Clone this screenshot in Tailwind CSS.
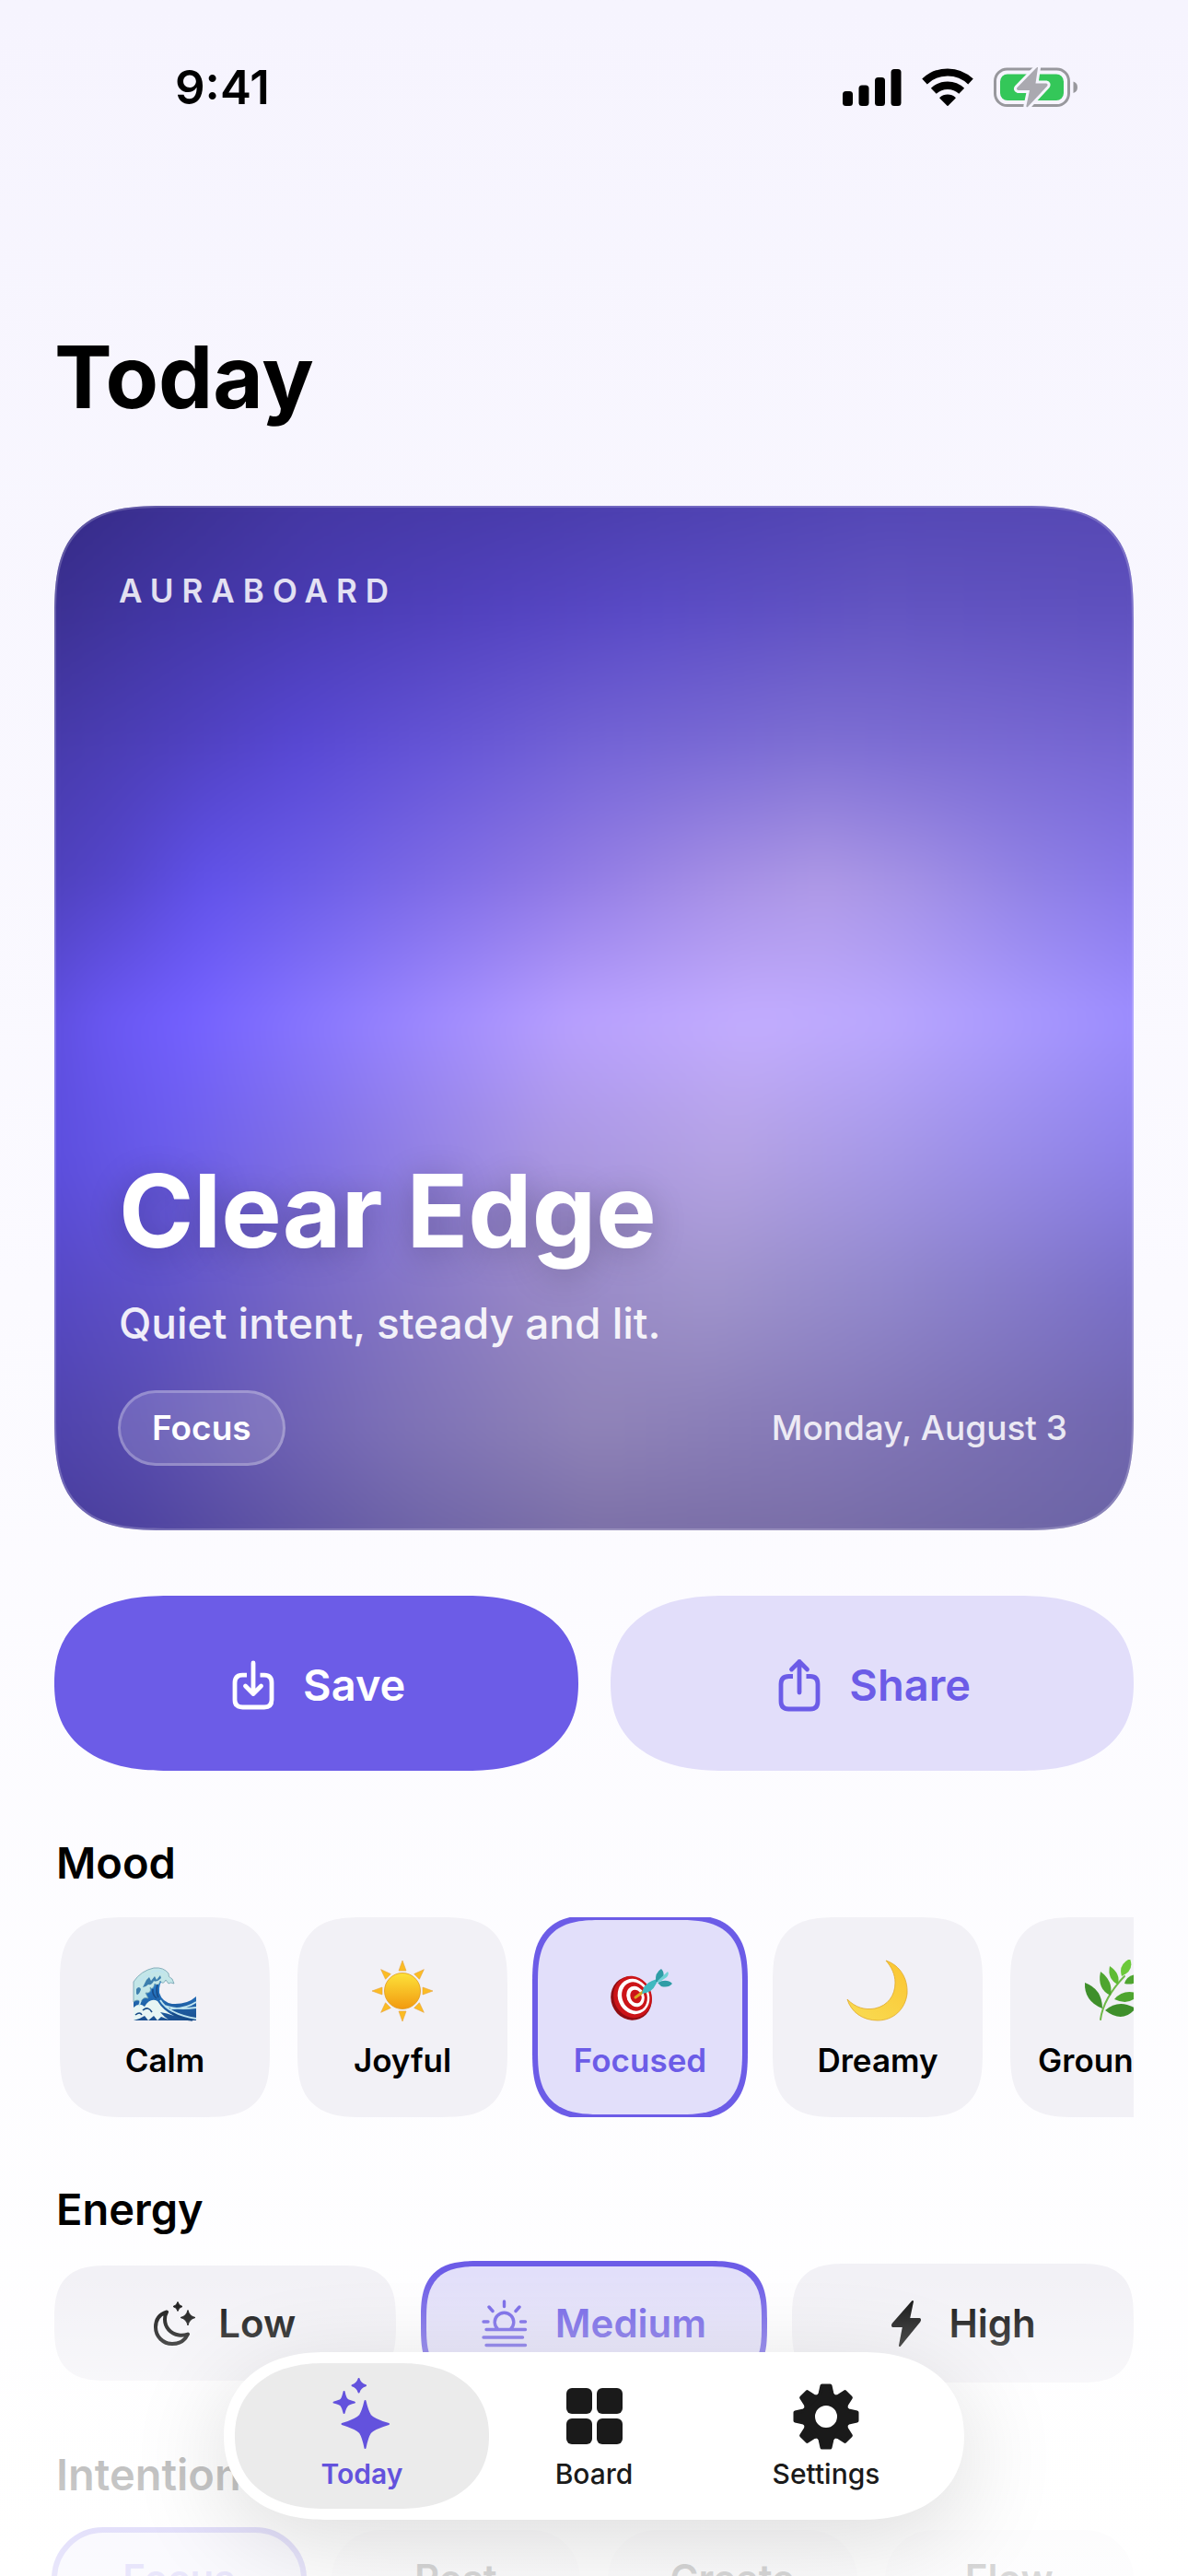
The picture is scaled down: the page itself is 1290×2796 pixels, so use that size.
<!DOCTYPE html>
<html lang="en">
<head>
    <meta charset="UTF-8">
    <meta name="viewport" content="width=device-width, initial-scale=1.0">
    <title>Today - Auraboard</title>
    <script src="https://cdn.jsdelivr.net/npm/@tailwindcss/browser@4"></script>
</head>
<body class="bg-white font-['Inter',sans-serif] text-black">
    <div class="relative h-screen overflow-hidden bg-linear-to-b from-[#f6f4fe] via-[#fbfaff] to-white">

        <!-- Status bar -->
        <header class="flex h-[190px] items-center justify-between pl-[190px] pr-[119px]">
            <span class="text-[51px] leading-[60px] font-semibold">9:41</span>
            <div class="flex items-center gap-[22px]">
                <svg class="h-10 w-16" viewBox="0 0 64 40" aria-label="Signal">
                    <rect x="0" y="24" width="11" height="16" rx="3.5"/>
                    <rect x="17.5" y="17.5" width="11" height="22.5" rx="3.5"/>
                    <rect x="35" y="9" width="11" height="31" rx="3.5"/>
                    <rect x="52.5" y="0" width="11" height="40" rx="3.5"/>
                </svg>
                <svg class="h-[42px] w-14" viewBox="0 0 56 42" fill="none" stroke="#000" aria-label="Wi-Fi">
                    <path stroke-width="8" d="M3 14.5A36 36 0 0 1 53 14.5"/>
                    <path stroke-width="8.5" d="M12.8 24.8A22 22 0 0 1 43.2 24.8"/>
                    <path fill="#000" stroke-width="1.5" stroke-linejoin="round" d="M28 40.2L20 32.2A12 12 0 0 1 36 32.2Z"/>
                </svg>
                <svg class="h-11 w-[92px]" viewBox="0 0 92 44" aria-label="Battery charging">
                    <rect x="1.5" y="2" width="80" height="39.5" rx="13" fill="none" stroke="#98989d" stroke-width="3"/>
                    <rect x="7" y="7.5" width="69" height="28.5" rx="8" fill="#34c759"/>
                    <path fill="#98989d" d="M86.5 15.5Q91 17 91 21.7T86.5 28Z"/>
                    <path fill="#aaa9b0" stroke="#f6f5fe" stroke-width="6" stroke-linejoin="round" paint-order="stroke" d="M48 0.5L45.5 17.5H57Q59.5 18 58 20.5L37 43Q35 44 35.5 41.5L39 25H26.5Q24 24 25.5 22L46 1Q48 -1 48 0.5Z"/>
                </svg>
            </div>
        </header>

        <main class="px-[59px]">
            <h1 class="mt-[159px] text-[94px] leading-[120px] font-bold">Today</h1>

            <!-- Aura card -->
            <section class="relative mt-20 flex aspect-[1172/1112] flex-col justify-between overflow-hidden rounded-[92px] px-[72px] pt-[69px] pb-[70px] text-white [corner-shape:superellipse(1.6)] supports-[corner-shape:squircle]:rounded-[126px]">
                <div id="aura" class="absolute -inset-8 isolate blur-lg"></div>
                <div class="absolute inset-0 rounded-[92px] border-2 border-white/20 [corner-shape:superellipse(1.6)] supports-[corner-shape:squircle]:rounded-[126px]"></div>
                <p class="relative -ml-[2px] text-[35px] leading-[46px] font-semibold tracking-[9px] text-white/85">AURABOARD</p>
                <div class="relative">
                    <h2 class="-ml-[2px] text-[110px] leading-[130px] font-bold [text-shadow:0_6px_36px_rgba(0,0,0,0.25)]">Clear Edge</h2>
                    <p class="-ml-[2px] mt-7 text-[46px] leading-[58px] font-medium text-white/90">Quiet intent, steady and lit.</p>
                    <div class="mt-[44px] flex items-center justify-between">
                        <span class="-ml-[3px] rounded-full border-3 border-white/25 bg-white/15 px-[34px] py-[14px] text-[37px] leading-[48px] font-semibold">Focus</span>
                        <time class="text-[37px] leading-[48px] font-medium text-white/85">Monday, August 3</time>
                    </div>
                </div>
            </section>

            <div class="mt-[71px] grid grid-cols-2 gap-[35px]">
                <button type="button" class="flex h-[190px] items-center justify-center gap-[31px] rounded-full bg-[#6c5ce7] pt-1 pl-[6px] text-[47px] leading-[60px] font-semibold text-white [corner-shape:superellipse(1.25)] supports-[corner-shape:squircle]:rounded-[124px/95px]">
                    <svg class="h-[54px] w-[46px]" viewBox="0 0 46 54" fill="none" stroke="currentColor" stroke-width="4.8" stroke-linecap="round" stroke-linejoin="round">
                        <path stroke-linecap="butt" d="M16 16.200H11.5Q3 16.200 3 24.500V43Q3 51 11.5 51H35Q43 51 43 43V24.500Q43 16.200 35 16.200H30.500"/>
                        <path d="M23 3V35.500M14.500 28L23 36.500L31.500 28"/>
                    </svg>
                    Save
                </button>
                <button type="button" class="flex h-[190px] items-center justify-center gap-[31px] rounded-full bg-[#e2defa] pt-1 pl-[6px] text-[47px] leading-[60px] font-semibold text-[#6c5ce7] [corner-shape:superellipse(1.25)] supports-[corner-shape:squircle]:rounded-[124px/95px]">
                    <svg class="h-[58px] w-[46px]" viewBox="0 0 46 58" fill="none" stroke="currentColor" stroke-width="4.8" stroke-linecap="round" stroke-linejoin="round">
                        <path stroke-linecap="butt" d="M16 19.500H11.5Q3 19.500 3 28V46.500Q3 55 11.5 55H35Q43 55 43 46.500V28Q43 19.500 35 19.500H30.500"/>
                        <path d="M23 37V3.500M14.500 12L23 3.500L31.500 12"/>
                    </svg>
                    Share
                </button>
            </div>

            <h3 class="mt-[70px] pl-[2px] text-[47px] leading-[60px] font-semibold">Mood</h3>
            <div class="mt-[29px] flex gap-[30px] overflow-hidden pl-[6px] text-[35px] leading-[42px] font-semibold">
                <button type="button" class="flex h-[217px] w-[228px] shrink-0 flex-col items-center justify-center gap-4 rounded-[54px] bg-[#f2f1f6] pt-1 [corner-shape:superellipse(1.5)] supports-[corner-shape:squircle]:rounded-[72px]">
                    <svg class="h-[72px] w-[72px]" viewBox="0 0 72 72">
                        <defs>
                            <linearGradient id="sea" x1="0" y1="0" x2="0" y2="1">
                                <stop offset="0" stop-color="#2b8be0"/>
                                <stop offset="1" stop-color="#1b4f8f"/>
                            </linearGradient>
                        </defs>
                        <path fill="url(#sea)" d="M2 66V28Q10 14 26 12L36 18Q29 26 30 36Q33 46 44 48Q60 49 70 40V66Z"/>
                        <path fill="#c3e6e8" stroke="#6f9fae" stroke-width="0.8" d="M2 34V24Q10 12 24 9Q35 8 40 15Q39 19 44 21L46 26Q42 24 40 26L37 22Q34 28 31 23Q29 30 25 26Q23 34 20 30Q22 37 15 36L18 42Q12 40 10 46Q6 42 2 46Z"/>
                        <path fill="#3d7fae" d="M16 22L19 19L21 23L25 18L27 22L31 17L32 20Q27 25 24 23Q22 28 18 27Q15 30 12 30ZM5 32Q8 28 10 32Q9 37 5 39Z"/>
                        <path fill="#e7f5f4" d="M2 66V52Q8 46 14 51Q20 41 28 45Q34 55 46 61Q38 58 31 57Q35 62 40 65L32 62L28 66L24 61L18 66L14 61Q8 65 2 66Z"/>
                        <path fill="none" stroke="#bfe4ef" stroke-width="1.8" d="M31 44Q40 59 70 64M36 50Q50 55 70 52M42 53Q58 54 70 46M5 38Q12 42 8 50M21 14Q28 10 35 14M9 23Q15 16 21 18"/>
                        <path fill="none" stroke="#184a86" stroke-width="1.6" d="M23 32Q22 38 27 42M12 55Q18 50 22 57M4 60Q9 56 11 60M44 58Q55 65 66 66M28 27Q26 35 29 41"/>
                    </svg>
                    Calm
                </button>
                <button type="button" class="flex h-[217px] w-[228px] shrink-0 flex-col items-center justify-center gap-4 rounded-[54px] bg-[#f2f1f6] pt-1 [corner-shape:superellipse(1.5)] supports-[corner-shape:squircle]:rounded-[72px]">
                    <svg class="h-[72px] w-[72px]" viewBox="0 0 72 72">
                        <defs>
                            <linearGradient id="sun" x1="0" y1="0" x2="0" y2="1">
                                <stop offset="0" stop-color="#fde23a"/>
                                <stop offset="1" stop-color="#f29a10"/>
                            </linearGradient>
                        </defs>
                        <g fill="#fbbc24" stroke="#e8a33a" stroke-width="0.6">
                            <path id="ray" d="M36 1L40 12H32Z"/>
                            <use href="#ray" transform="rotate(45 36 34)"/>
                            <use href="#ray" transform="rotate(90 36 34)"/>
                            <use href="#ray" transform="rotate(135 36 34)"/>
                            <use href="#ray" transform="rotate(180 36 34)"/>
                            <use href="#ray" transform="rotate(225 36 34)"/>
                            <use href="#ray" transform="rotate(270 36 34)"/>
                            <use href="#ray" transform="rotate(315 36 34)"/>
                        </g>
                        <circle cx="36" cy="34" r="19.5" fill="url(#sun)" stroke="#e29a1c" stroke-width="0.8"/>
                    </svg>
                    Joyful
                </button>
                <button type="button" class="flex h-[217px] w-[228px] shrink-0 flex-col items-center justify-center gap-4 rounded-[54px] bg-[#e2dffa] pt-1 text-[#6c5ce7] outline-6 -outline-offset-3 outline-[#6c5ce7] [corner-shape:superellipse(1.5)] supports-[corner-shape:squircle]:rounded-[72px]">
                    <svg class="h-[72px] w-[72px]" viewBox="0 0 72 72">
                        <ellipse cx="26.5" cy="42" rx="22" ry="24" transform="rotate(-22 26.5 42)" fill="#8f0d12"/>
                        <ellipse cx="28" cy="40.5" rx="20.5" ry="23" transform="rotate(-22 28 40.5)" fill="#cc1418"/>
                        <ellipse cx="29" cy="40" rx="17" ry="19.5" transform="rotate(-22 29 40)" fill="#fff"/>
                        <ellipse cx="30" cy="40" rx="13.5" ry="16" transform="rotate(-22 30 40)" fill="#cc1418"/>
                        <ellipse cx="31" cy="40" rx="9.5" ry="11.5" transform="rotate(-22 31 40)" fill="#fff"/>
                        <ellipse cx="31.5" cy="40" rx="6" ry="7.5" transform="rotate(-22 31.5 40)" fill="#cc1418"/>
                        <path d="M31 41L42 33" stroke="#d9a520" stroke-width="3" stroke-linecap="round"/>
                        <path fill="#3fb9c0" d="M38 37Q39 27 49 23L57 20L53 27Q49 36 38 37Z"/>
                        <path fill="#2f9da6" d="M53 24Q52 14 59 10Q63 14 61 19L56 24ZM55 25Q65 20 71 26Q67 31 59 29Z"/>
                        <path fill="#6fd3d6" d="M55 23L66 13Q68 15 65 19L56 25Z"/>
                    </svg>
                    Focused
                </button>
                <button type="button" class="flex h-[217px] w-[228px] shrink-0 flex-col items-center justify-center gap-4 rounded-[54px] bg-[#f2f1f6] pt-1 [corner-shape:superellipse(1.5)] supports-[corner-shape:squircle]:rounded-[72px]">
                    <svg class="h-[72px] w-[72px]" viewBox="0 0 72 72">
                        <defs>
                            <linearGradient id="moon" x1="1" y1="0" x2="0.3" y2="1">
                                <stop offset="0" stop-color="#fbc531"/>
                                <stop offset="1" stop-color="#f9d94f"/>
                            </linearGradient>
                        </defs>
                        <path fill="url(#moon)" stroke="#dfa92c" stroke-width="0.8" d="M45 1C60 6 69 20 68 37C66 54 53 66 36 66C20 66 7 57 3 43C12 52 22 55 33 53C47 50 55 39 55 25C55 16 51 8 45 1Z"/>
                    </svg>
                    Dreamy
                </button>
                <button type="button" class="flex h-[217px] w-[228px] shrink-0 flex-col items-center justify-center gap-4 rounded-[54px] bg-[#f2f1f6] pt-1 [corner-shape:superellipse(1.5)] supports-[corner-shape:squircle]:rounded-[72px]">
                    <svg class="h-[72px] w-[72px]" viewBox="0 0 72 72">
                        <path d="M20 65Q23 42 46 18" fill="none" stroke="#6fb948" stroke-width="2" stroke-linecap="round"/>
                        <g fill="#4ea52f">
                            <path fill="#3f8f2b" d="M22 53Q2 45 3 25Q22 32 22 53Z"/>
                            <path d="M31 39Q16 32 20 13Q34 23 31 39Z"/>
                            <path fill="#5fbb34" d="M39 27Q27 21 30 7Q42 15 39 27Z"/>
                            <path fill="#6cc93b" d="M43 18Q39 5 52 -1Q57 12 43 18Z"/>
                            <path d="M46 26Q49 15 64 16Q60 29 46 26Z"/>
                            <path d="M35 43Q45 31 62 37Q52 51 35 43Z"/>
                            <path fill="#3f8f2b" d="M25 55Q40 42 58 53Q44 70 25 55Z"/>
                        </g>
                    </svg>
                    Grounded
                </button>
            </div>

            <h3 class="mt-[70px] pl-[2px] text-[47px] leading-[60px] font-semibold">Energy</h3>
            <div class="mt-[29px] grid grid-cols-3 items-center gap-[30px] text-[42px] leading-[54px] font-semibold">
                <button type="button" class="flex h-[125px] items-center justify-center gap-[24px] rounded-[48px] bg-[#f2f1f6] [corner-shape:superellipse(1.5)] supports-[corner-shape:squircle]:rounded-[60px]">
                    <svg class="h-12 w-[46px]" viewBox="0 0 46 48">
                        <path fill="none" stroke="#000" stroke-width="4" stroke-linejoin="round" d="M14 11.5C6 14 2 20 2 28C2 38 10 46 20 46C28 46 34 42 37 35.5C33 37 30 37 27 36.5C18 35 12 28 12 19.5C12 16.5 12.5 14 14 11.5Z"/>
                        <path stroke="#000" stroke-linejoin="round" d="M26 0.500Q27 4.500 31 5.500Q27 6.500 26 10.500Q25 6.500 21 5.500Q25 4.500 26 0.500ZM37 9.500Q38.500 16 45 17.500Q38.500 19 37 26Q35.500 19 29 17.500Q35.500 16 37 9.500Z"/>
                    </svg>
                    Low
                </button>
                <button type="button" class="flex h-[129px] items-center justify-center gap-[30px] rounded-[48px] bg-[#e2dffa] text-[#6c5ce7] outline-6 -outline-offset-3 outline-[#6c5ce7] [corner-shape:superellipse(1.5)] supports-[corner-shape:squircle]:rounded-[60px]">
                    <svg class="h-[52px] w-[50px]" viewBox="0 0 50 52" fill="none" stroke="currentColor" stroke-width="3.4" stroke-linecap="round">
                        <path d="M18 32.5A10.3 10.3 0 1 1 31 32.5M5 32.5H47.5M2 41H44.5M5 49.5H47.5M24.5 2V7.5M8 8L12 12.5M41 8L37 12.5M2 24H7M42.5 24H47.5"/>
                    </svg>
                    Medium
                </button>
                <button type="button" class="flex h-[129px] items-center justify-center gap-[30px] rounded-[48px] bg-[#f2f1f6] [corner-shape:superellipse(1.5)] supports-[corner-shape:squircle]:rounded-[60px]">
                    <svg class="h-[52px] w-[34px]" viewBox="0 0 34 52">
                        <path stroke="#000" stroke-width="2" stroke-linejoin="round" d="M24 2L20 21H31.5Q32.5 22 31.5 23.5L10 50L14 29H2.5Q1.5 28 2.5 26.5Z"/>
                    </svg>
                    High
                </button>
            </div>

            <h3 class="mt-[70px] pl-[2px] text-[47px] leading-[60px] font-semibold">Intention</h3>
            <div class="mt-[30px] grid grid-cols-4 gap-[30px] text-[42px] leading-[54px] font-semibold">
                <button type="button" class="h-[106px] rounded-full bg-[#e2dffa] text-[#6c5ce7] outline-6 -outline-offset-3 outline-[#6c5ce7]">Focus</button>
                <button type="button" class="h-[106px] rounded-full bg-[#f2f1f6]">Rest</button>
                <button type="button" class="h-[106px] rounded-full bg-[#f2f1f6]">Create</button>
                <button type="button" class="h-[106px] rounded-full bg-[#f2f1f6]">Flow</button>
            </div>
        </main>

        <!-- Content fades out behind the tab bar -->
        <div class="pointer-events-none absolute inset-x-0 bottom-0 h-[330px] bg-linear-to-b from-white/0 from-0% via-white/75 via-60% to-white/85"></div>

        <nav class="absolute inset-x-0 bottom-[61px] mx-auto flex w-fit rounded-full bg-white p-3 text-[30px] leading-9 font-medium text-[#1a1a1a] shadow-[0_24px_110px_rgba(0,0,0,0.14)] [corner-shape:superellipse(1.15)] supports-[corner-shape:squircle]:rounded-[110px/91px]">
            <a href="#today" aria-current="page" class="flex h-[158px] w-[276px] flex-col items-center justify-end gap-2 rounded-full bg-[#ebebeb] pb-5 font-semibold text-[#6352dd] [corner-shape:superellipse(1.15)] supports-[corner-shape:squircle]:rounded-[96px/79px]">
                <svg class="h-[78px] w-16" viewBox="0 0 64 78" fill="currentColor" stroke="currentColor" stroke-width="2" stroke-linejoin="round">
                    <path d="M35.500 25Q38 36 41 40.500Q44.500 45 61 50Q44.500 55 41 59.500Q38 64 35.500 76Q33 64 30 59.500Q26.500 55 10.500 50Q26.500 45 30 40.500Q33 36 35.500 25Z"/>
                    <path d="M12.600 15Q14 22 16 23.500Q17.500 25 24 26.600Q17.500 28 16 30Q14 32 12.600 38Q11 32 9.500 30Q8 28 1.500 26.600Q8 25 9.500 23.500Q11 22 12.600 15Z"/>
                    <path d="M28.600 1Q30 6.500 36 8.200Q30 10 28.600 15.500Q27 10 21.500 8.200Q27 6.500 28.600 1Z"/>
                </svg>
                Today
            </a>
            <a href="#board" class="-ml-6 flex h-[158px] w-[276px] flex-col items-center justify-end gap-2 pb-5">
                <svg class="h-[78px] w-16" viewBox="0 0 64 78" fill="currentColor">
                    <rect x="2" y="11" width="28" height="28" rx="6"/>
                    <rect x="35" y="11" width="28" height="28" rx="6"/>
                    <rect x="2" y="44" width="28" height="28" rx="6"/>
                    <rect x="35" y="44" width="28" height="28" rx="6"/>
                </svg>
                Board
            </a>
            <a href="#settings" class="-ml-6 flex h-[158px] w-[276px] flex-col items-center justify-end gap-2 pb-5">
                <svg class="h-[78px] w-[72px]" viewBox="0 0 72 78" fill="currentColor">
                    <circle cx="36" cy="42" r="18.5" fill="none" stroke="currentColor" stroke-width="13"/>
                    <g stroke="currentColor" stroke-width="4" stroke-linejoin="round">
                        <path id="tooth" d="M27.500 20L29.500 17.500L31.500 8.500H40.500L42.500 17.500L44.500 20Z"/>
                        <use href="#tooth" transform="rotate(45 36 42)"/>
                        <use href="#tooth" transform="rotate(90 36 42)"/>
                        <use href="#tooth" transform="rotate(135 36 42)"/>
                        <use href="#tooth" transform="rotate(180 36 42)"/>
                        <use href="#tooth" transform="rotate(225 36 42)"/>
                        <use href="#tooth" transform="rotate(270 36 42)"/>
                        <use href="#tooth" transform="rotate(315 36 42)"/>
                    </g>
                </svg>
                Settings
            </a>
        </nav>
    </div>

    <script>
        // Colour mesh for the "Clear Edge" aura, one entry per row from top to bottom
        const auraRows = [
            '#312780 0%, #3a2f8e 12%, #43369f 25%, #463aa6 45%, #5044b2 75%, #5547b0 100%',
            '#3b308f 0%, #4236a4 12%, #4b3db6 28%, #5343c0 42%, #5a4bc6 55%, #6355c2 75%, #5e50be 100%',
            '#463aa8 0%, #4e40bc 12%, #5848d4 24%, #6656d6 37%, #7464d6 50%, #7f70d4 70%, #7464d2 100%',
            '#4d40b8 0%, #5546cc 8%, #6152ea 16%, #6e5fe8 26%, #8e78e6 46%, #a48ee6 60%, #ae99e6 70%, #a391e6 78%, #9182e6 88%, #8575ea 100%',
            '#5a4bd6 0%, #6957f2 7%, #7360ff 14%, #8a78ff 26%, #b8a0ff 48%, #c3adff 64%, #bba8ff 75%, #a999ff 88%, #9a8aff 100%',
            '#594bdc 0%, #6a5cea 12%, #8070e6 25%, #a996e2 46%, #b5a3e4 62%, #a799e8 75%, #8a7eea 100%',
            '#5446c4 0%, #6053c8 12%, #7869c6 25%, #9686c6 44%, #a094cc 60%, #9288cc 75%, #776cc8 100%',
            '#4d41ac 0%, #584cb0 10%, #6a5db4 20%, #7c70b6 32%, #9084b8 50%, #8478b8 72%, #6e64ae 100%',
            '#443996 0%, #4c419c 10%, #5c52a0 22%, #6c62a4 35%, #786ca4 50%, #776ca4 68%, #6862a4 100%'
        ];

        // Each row covers the ones below it and fades out before the next row's line
        const aura = document.getElementById('aura');
        const step = 100 / (auraRows.length - 1);
        auraRows.forEach((stops, i) => {
            const layer = document.createElement('div');
            layer.className = 'absolute inset-0';
            layer.style.zIndex = auraRows.length - i;
            layer.style.background = `linear-gradient(to right, ${stops})`;
            if (i < auraRows.length - 1) {
                layer.style.maskImage = `linear-gradient(to bottom, #000 ${i * step}%, transparent ${(i + 1) * step}%)`;
            }
            aura.appendChild(layer);
        });
    </script>
</body>
</html>
